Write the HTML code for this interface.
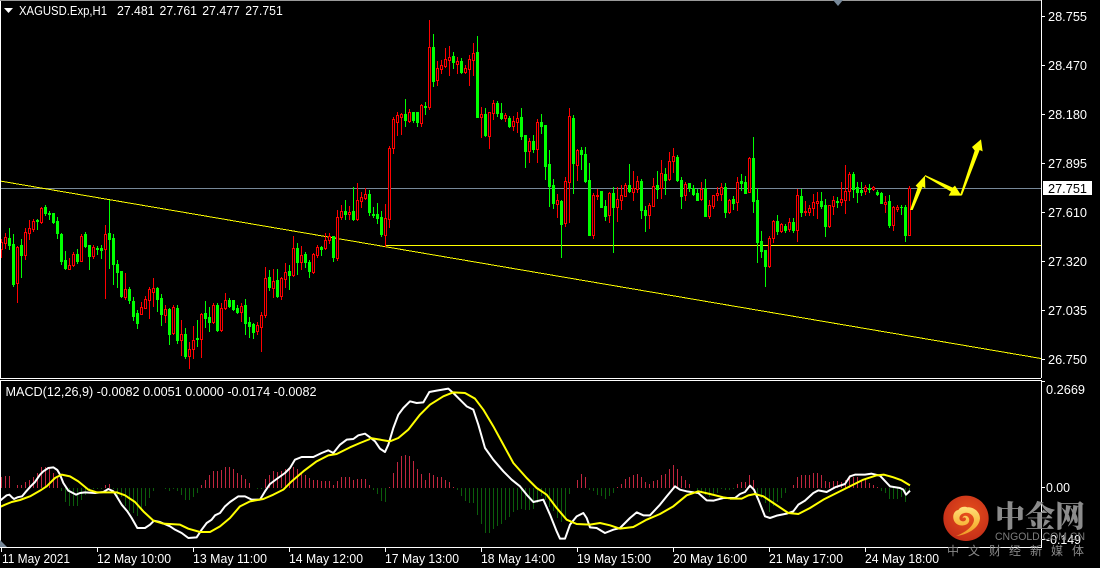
<!DOCTYPE html>
<html><head><meta charset="utf-8"><title>XAGUSD.Exp,H1</title>
<style>
html,body{margin:0;padding:0;background:#000;width:1100px;height:568px;overflow:hidden}
svg{display:block}
text{font-family:"Liberation Sans",sans-serif;font-size:13px;fill:#fff}
.c{shape-rendering:crispEdges;fill:none}
</style></head><body>
<svg width="1100" height="568" viewBox="0 0 1100 568" xmlns="http://www.w3.org/2000/svg">
<rect width="1100" height="568" fill="#000"/>

<!-- hist -->
<path class="c" stroke="#c2263f" stroke-width="1" d="M1.5 488V477M5.5 488V476M9.5 488V476M17.5 488V485M21.5 488V485M25.5 488V482M29.5 488V480M33.5 488V477M37.5 488V473M41.5 488V467M45.5 488V467M49.5 488V467M53.5 488V473M57.5 488V478M105.5 488V485M109.5 488V484M201.5 488V485M205.5 488V480M209.5 488V475M213.5 488V471M217.5 488V471M221.5 488V470M225.5 488V467M229.5 488V467M233.5 488V469M237.5 488V473M241.5 488V475M245.5 488V479M249.5 488V483M265.5 488V479M269.5 488V475M273.5 488V471M277.5 488V472M281.5 488V471M285.5 488V469M289.5 488V469M293.5 488V467M297.5 488V469M301.5 488V473M305.5 488V475M309.5 488V478M313.5 488V480M317.5 488V480M321.5 488V481M325.5 488V481M329.5 488V481M333.5 488V485M337.5 488V481M341.5 488V477M345.5 488V477M349.5 488V477M353.5 488V480M357.5 488V479M361.5 488V479M365.5 488V479M369.5 488V485M389.5 488V487M393.5 488V473M397.5 488V462M401.5 488V456M405.5 488V455M409.5 488V456M413.5 488V461M417.5 488V469M421.5 488V474M425.5 488V480M429.5 488V473M433.5 488V475M437.5 488V477M441.5 488V477M445.5 488V480M449.5 488V482M453.5 488V487M577.5 488V480M581.5 488V474M585.5 488V477M617.5 488V487M621.5 488V484M625.5 488V479M629.5 488V477M633.5 488V475M637.5 488V474M641.5 488V477M645.5 488V482M649.5 488V484M653.5 488V481M657.5 488V480M661.5 488V475M665.5 488V474M669.5 488V469M673.5 488V465M677.5 488V469M681.5 488V476M685.5 488V480M689.5 488V484M737.5 488V484M741.5 488V482M745.5 488V482M749.5 488V475M753.5 488V480M793.5 488V485M797.5 488V477M801.5 488V475M805.5 488V475M809.5 488V475M813.5 488V473M817.5 488V473M821.5 488V475M825.5 488V481M829.5 488V482M833.5 488V481M837.5 488V481M841.5 488V482M845.5 488V480M849.5 488V477M853.5 488V477M857.5 488V477M861.5 488V480M865.5 488V480M869.5 488V483M873.5 488V485M877.5 488V487"/>
<path class="c" stroke="#0b5e0b" stroke-width="1" d="M61.5 488V491M65.5 488V502M69.5 488V506M73.5 488V506M77.5 488V506M81.5 488V500M85.5 488V495M89.5 488V491M93.5 488V489M97.5 488V489M101.5 488V489M113.5 488V489M117.5 488V498M121.5 488V497M125.5 488V506M129.5 488V511M133.5 488V513M137.5 488V516M141.5 488V511M145.5 488V506M149.5 488V498M153.5 488V491M165.5 488V489M169.5 488V491M173.5 488V489M177.5 488V491M181.5 488V495M185.5 488V500M189.5 488V500M193.5 488V497M197.5 488V493M257.5 488V489M261.5 488V489M373.5 488V490M377.5 488V494M381.5 488V501M385.5 488V502M457.5 488V490M461.5 488V496M465.5 488V501M469.5 488V503M473.5 488V503M477.5 488V515M481.5 488V524M485.5 488V533M489.5 488V533M493.5 488V529M497.5 488V526M501.5 488V524M505.5 488V520M509.5 488V517M513.5 488V512M517.5 488V510M521.5 488V509M525.5 488V510M529.5 488V510M533.5 488V509M537.5 488V503M541.5 488V496M545.5 488V500M549.5 488V507M553.5 488V511M557.5 488V518M561.5 488V522M565.5 488V518M569.5 488V494M589.5 488V490M593.5 488V491M597.5 488V495M601.5 488V496M605.5 488V499M609.5 488V496M613.5 488V493M697.5 488V491M701.5 488V493M705.5 488V495M709.5 488V497M713.5 488V495M717.5 488V493M721.5 488V489M725.5 488V490M729.5 488V490M733.5 488V489M757.5 488V498M761.5 488V498M765.5 488V503M769.5 488V512M773.5 488V506M777.5 488V502M781.5 488V498M785.5 488V493M881.5 488V491M885.5 488V493M889.5 488V499M893.5 488V499M897.5 488V499M901.5 488V497M905.5 488V502M909.5 488V491"/>

<!-- MACD lines -->
<g fill="none" stroke="#fff" stroke-width="6" stroke-linejoin="round">
<polyline transform="translate(0,378) scale(.33333)" points="0,368 10,360 20,352 28,350 36,358 42,363 52,358 66,355 76,343 92,325 105,312 120,290 130,280 145,270 160,268 172,276 180,290 190,315 205,338 228,350 240,345 255,343 285,345 310,342 325,333 340,340 350,355 365,380 382,400 395,420 412,450 435,450 450,440 462,428 480,432 510,445 525,455 545,465 565,480 590,478 605,455 620,435 635,425 645,412 660,405 675,385 690,372 715,355 735,355 755,365 780,365 795,340 810,318 830,303 855,285 870,270 885,245 905,237 940,237 965,225 985,217 1000,225 1020,200 1040,185 1060,183 1075,172 1095,167 1110,178"/>
<polyline transform="translate(370,378) scale(.33333)" points="0,178 15,190 30,212 45,222 55,200 70,150 85,110 100,90 120,70 140,75 160,73 178,42 200,38 235,32 250,45 270,65 290,85 310,95 325,140 345,210 370,245 400,280 425,305 450,325 470,350 490,372 520,365 540,410 560,460 570,482 585,482 600,440 620,415 640,405 650,420 660,448 680,450 705,465 730,455 750,450 780,420 800,403 820,412 840,412 870,380 890,355 915,325 930,335 950,340 985,345 1010,367 1030,368 1060,360 1080,360"/>
<polyline transform="translate(730,378) scale(.33333)" points="0,360 15,360 30,348 45,342 60,323 72,335 85,365 105,415 120,420 140,413 170,407 190,400 205,380 225,368 250,345 265,337 290,342 315,328 345,318 360,295 375,290 405,290 425,287 450,293 480,325 510,330 520,335 528,350 540,338"/>
</g>
<g fill="none" stroke="#ffff00" stroke-width="6" stroke-linejoin="round">
<polyline transform="translate(0,378) scale(.33333)" points="0,387 15,380 35,372 60,366 90,355 120,338 140,325 165,300 185,290 210,295 235,310 265,335 290,343 350,343 375,352 405,372 430,400 460,428 490,437 540,440 565,452 600,462 630,462 660,445 690,420 720,385 750,370 790,363 820,350 850,335 875,310 910,280 950,250 985,232 1010,228 1050,208 1080,195 1110,183"/>
<polyline transform="translate(370,378) scale(.33333)" points="0,180 30,185 60,190 85,180 115,155 150,110 180,80 220,55 250,43 285,45 315,62 340,95 370,145 400,200 430,255 470,300 500,330 530,350 560,390 590,425 620,438 660,440 690,435 720,442 750,452 790,447 830,425 870,408 910,385 950,352 985,340 1020,348 1060,358 1080,361"/>
<polyline transform="translate(730,378) scale(.33333)" points="0,362 35,362 55,352 75,348 100,355 130,375 175,405 205,408 240,390 280,365 340,335 400,305 440,292 462,290 490,298 515,307 540,322"/>
</g>

<!-- level lines -->
<path class="c" stroke="#778899" d="M0 188.5H1041"/>
<path class="c" stroke="#ffff00" d="M0 181L1041 358.5"/>
<path class="c" stroke="#ffff00" d="M385 245.5H1041"/>

<!-- wicks -->
<path class="c" stroke="#00ff00" stroke-width="1" d="M9.5 228V250M13.5 234V287M21.5 239V278M37.5 219V230M45.5 205V216M49.5 211V220M53.5 213V224M57.5 217V239M61.5 233V265M65.5 251V270M77.5 249V264M85.5 232V248M89.5 245V270M97.5 246V255M101.5 245V259M109.5 200V269M113.5 234V285M117.5 260V288M121.5 271V298M129.5 287V304M133.5 297V321M137.5 310V329M157.5 287V312M161.5 294V326M169.5 308V345M177.5 305V344M185.5 328V359M197.5 320V347M205.5 301V328M209.5 307V332M217.5 303V332M229.5 298V308M233.5 300V311M237.5 305V314M245.5 299V335M249.5 317V338M253.5 323V339M269.5 270V291M277.5 269V298M289.5 265V290M297.5 243V275M305.5 252V268M309.5 260V278M321.5 246V256M333.5 236V262M345.5 200V220M353.5 187V221M369.5 190V216M373.5 207V218M377.5 203V224M381.5 211V237M405.5 99V127M413.5 112V123M417.5 112V127M425.5 102V115M433.5 34V87M453.5 52V69M461.5 58V74M477.5 36V118M485.5 108V137M497.5 101V117M501.5 103V120M509.5 116V128M521.5 108V140M525.5 135V168M533.5 135V153M541.5 114V134M545.5 125V180M549.5 150V207M553.5 179V209M561.5 200V258M573.5 115V194M581.5 147V170M585.5 147V183M589.5 163V236M601.5 191V208M605.5 200V221M613.5 187V253M629.5 164V193M641.5 179V219M645.5 206V232M657.5 171V199M665.5 168V195M677.5 155V182M681.5 177V209M689.5 183V192M693.5 185V196M697.5 189V201M705.5 179V217M725.5 183V218M733.5 196V210M741.5 174V191M745.5 176V194M753.5 137V213M757.5 188V263M761.5 231V258M765.5 250V287M777.5 215V235M785.5 224V233M793.5 218V233M801.5 189V217M821.5 192V209M825.5 199V237M837.5 197V208M853.5 172V198M857.5 182V203M861.5 182V196M869.5 184V193M877.5 190V196M881.5 192V204M889.5 195V228M901.5 205V215M905.5 205V242"/>
<path class="c" stroke="#ff0000" stroke-width="1" d="M1.5 239V258M5.5 233V249M17.5 246V303M25.5 228V260M29.5 220V240M33.5 219V232M41.5 207V224M69.5 258V270M73.5 252V267M81.5 234V262M93.5 245V259M105.5 225V299M125.5 273V300M141.5 302V315M145.5 296V309M149.5 287V319M153.5 278V307M165.5 305V323M173.5 305V335M181.5 320V356M189.5 342V369M193.5 326V359M201.5 313V358M213.5 303V324M221.5 303V332M225.5 293V310M241.5 303V322M257.5 322V335M261.5 312V352M265.5 267V318M273.5 269V298M281.5 277V300M285.5 263V288M293.5 236V277M301.5 246V270M313.5 253V274M317.5 245V258M325.5 233V250M329.5 233V244M337.5 210V261M341.5 205V220M349.5 206V220M357.5 183V221M361.5 192V208M365.5 188V200M385.5 204V247M389.5 146V228M393.5 117V154M397.5 112V136M401.5 113V135M409.5 109V123M421.5 104V127M429.5 20V110M437.5 61V86M441.5 60V74M445.5 48V68M449.5 46V76M457.5 57V74M465.5 65V74M469.5 55V86M473.5 43V76M481.5 107V138M489.5 112V149M493.5 100V120M505.5 113V122M513.5 116V131M517.5 112V133M529.5 138V163M537.5 119V163M557.5 194V218M565.5 177V227M569.5 108V223M577.5 149V181M593.5 193V239M597.5 189V200M609.5 192V223M617.5 187V222M621.5 185V210M625.5 183V197M633.5 171V201M637.5 176V193M649.5 203V229M653.5 178V207M661.5 160V199M669.5 152V181M673.5 148V173M685.5 182V201M701.5 182V201M709.5 200V219M713.5 195V209M717.5 187V201M721.5 183V201M729.5 199V214M737.5 177V211M749.5 157V193M769.5 236V268M773.5 220V243M781.5 223V233M789.5 218V232M797.5 189V242M805.5 201V216M809.5 205V216M813.5 194V216M817.5 192V219M829.5 205V228M833.5 196V215M841.5 182V206M845.5 165V214M849.5 172V201M865.5 185V195M873.5 186V191M885.5 196V213M893.5 206V231M897.5 205V212M909.5 186V236"/>

<!-- green bodies -->
<path class="c" stroke="#00ff00" stroke-width="3" d="M9.5 238V246M13.5 244V285M21.5 245V256M37.5 220V222M45.5 207V214M49.5 213V215M53.5 213V223M57.5 221V234M61.5 234V262M65.5 260V269M77.5 254V262M85.5 234V247M89.5 245V257M97.5 248V250M101.5 248V251M109.5 233V240M113.5 238V265M117.5 264V273M121.5 271V297M129.5 289V301M133.5 301V317M137.5 313V324M157.5 288V300M161.5 298V315M169.5 309V335M177.5 308V341M185.5 334V357M197.5 338V340M205.5 313V319M209.5 317V323M217.5 305V331M229.5 300V307M233.5 300V310M237.5 308V313M245.5 305V324M249.5 322V327M253.5 324V333M269.5 277V288M277.5 280V297M289.5 271V276M297.5 248V263M305.5 254V263M309.5 262V272M321.5 247V250M333.5 236V258M345.5 211V215M353.5 211V220M369.5 194V213M373.5 214V216M377.5 214V219M381.5 217V235M405.5 114V121M413.5 112V121M417.5 112V123M425.5 106V108M433.5 47V82M453.5 56V63M461.5 61V73M477.5 52V118M485.5 114V136M497.5 103V114M501.5 113V119M509.5 118V127M521.5 117V137M525.5 135V152M533.5 141V150M541.5 122V127M545.5 125V167M549.5 164V187M553.5 185V204M561.5 201V225M573.5 118V164M581.5 150V155M585.5 154V182M589.5 180V236M601.5 191V208M605.5 206V217M613.5 193V208M629.5 185V192M641.5 181V211M645.5 210V216M657.5 185V190M665.5 174V181M677.5 157V181M681.5 180V197M689.5 183V189M693.5 188V195M697.5 193V201M705.5 188V217M725.5 187V213M733.5 199V204M741.5 181V184M745.5 182V194M753.5 158V202M757.5 200V243M761.5 241V252M765.5 250V267M777.5 221V232M785.5 226V231M793.5 222V231M801.5 196V213M821.5 201V207M825.5 205V227M837.5 201V203M853.5 174V190M857.5 187V193M861.5 190V193M869.5 188V190M877.5 192V195M881.5 193V204M889.5 201V226M901.5 207V208M905.5 207V236"/>

<!-- red bodies (hollow) -->
<path class="c" stroke="#ff0000" stroke-width="1" style="fill:#000" d="M.5 242.5H2.5V249.5H.5ZM4.5 237.5H6.5V243.5H4.5ZM16.5 247.5H18.5V283.5H16.5ZM24.5 232.5H26.5V255.5H24.5ZM28.5 228.5H30.5V233.5H28.5ZM32.5 221.5H34.5V229.5H32.5ZM40.5 208.5H42.5V222.5H40.5ZM68.5 265.5H70.5V269.5H68.5ZM72.5 254.5H74.5V265.5H72.5ZM80.5 236.5H82.5V261.5H80.5ZM92.5 247.5H94.5V256.5H92.5ZM104.5 234.5H106.5V249.5H104.5ZM124.5 289.5H126.5V297.5H124.5ZM140.5 307.5H142.5V314.5H140.5ZM144.5 299.5H146.5V308.5H144.5ZM148.5 289.5H150.5V300.5H148.5ZM152.5 288.5H154.5V292.5H152.5ZM164.5 309.5H166.5V315.5H164.5ZM172.5 307.5H174.5V333.5H172.5ZM180.5 334.5H182.5V340.5H180.5ZM188.5 349.5H190.5V356.5H188.5ZM192.5 340.5H194.5V349.5H192.5ZM200.5 314.5H202.5V339.5H200.5ZM212.5 305.5H214.5V322.5H212.5ZM220.5 308.5H222.5V330.5H220.5ZM224.5 300.5H226.5V308.5H224.5ZM240.5 306.5H242.5V312.5H240.5ZM256.5 325.5H258.5V331.5H256.5ZM260.5 315.5H262.5V327.5H260.5ZM264.5 278.5H266.5V315.5H264.5ZM272.5 281.5H274.5V288.5H272.5ZM280.5 278.5H282.5V296.5H280.5ZM284.5 272.5H286.5V279.5H284.5ZM292.5 248.5H294.5V275.5H292.5ZM300.5 255.5H302.5V262.5H300.5ZM312.5 254.5H314.5V272.5H312.5ZM316.5 247.5H318.5V255.5H316.5ZM324.5 240.5H326.5V248.5H324.5ZM328.5 236.5H330.5V240.5H328.5ZM336.5 217.5H338.5V258.5H336.5ZM340.5 211.5H342.5V217.5H340.5ZM348.5 212.5H350.5V214.5H348.5ZM356.5 200.5H358.5V219.5H356.5ZM360.5 197.5H362.5V201.5H360.5ZM364.5 194.5H366.5V198.5H364.5ZM384.5 218.5H386.5V235.5H384.5ZM388.5 148.5H390.5V219.5H388.5ZM392.5 119.5H394.5V148.5H392.5ZM396.5 115.5H398.5V122.5H396.5ZM400.5 114.5H402.5V117.5H400.5ZM408.5 112.5H410.5V121.5H408.5ZM420.5 105.5H422.5V123.5H420.5ZM428.5 47.5H430.5V107.5H428.5ZM436.5 68.5H438.5V80.5H436.5ZM440.5 65.5H442.5V69.5H440.5ZM444.5 59.5H446.5V66.5H444.5ZM448.5 57.5H450.5V60.5H448.5ZM456.5 61.5H458.5V64.5H456.5ZM464.5 68.5H466.5V72.5H464.5ZM468.5 59.5H470.5V69.5H468.5ZM472.5 53.5H474.5V60.5H472.5ZM480.5 114.5H482.5V117.5H480.5ZM488.5 112.5H490.5V136.5H488.5ZM492.5 103.5H494.5V113.5H492.5ZM504.5 115.5H506.5V118.5H504.5ZM512.5 121.5H514.5V126.5H512.5ZM516.5 118.5H518.5V122.5H516.5ZM528.5 141.5H530.5V151.5H528.5ZM536.5 122.5H538.5V149.5H536.5ZM556.5 200.5H558.5V204.5H556.5ZM564.5 181.5H566.5V223.5H564.5ZM568.5 116.5H570.5V182.5H568.5ZM576.5 150.5H578.5V165.5H576.5ZM592.5 195.5H594.5V235.5H592.5ZM596.5 195.5H598.5V196.5H596.5ZM608.5 193.5H610.5V215.5H608.5ZM616.5 199.5H618.5V207.5H616.5ZM620.5 195.5H622.5V200.5H620.5ZM624.5 185.5H626.5V196.5H624.5ZM632.5 188.5H634.5V192.5H632.5ZM636.5 181.5H638.5V189.5H636.5ZM648.5 205.5H650.5V215.5H648.5ZM652.5 186.5H654.5V206.5H652.5ZM660.5 173.5H662.5V188.5H660.5ZM668.5 161.5H670.5V179.5H668.5ZM672.5 156.5H674.5V161.5H672.5ZM684.5 184.5H686.5V195.5H684.5ZM700.5 189.5H702.5V199.5H700.5ZM708.5 205.5H710.5V216.5H708.5ZM712.5 195.5H714.5V206.5H712.5ZM716.5 193.5H718.5V195.5H716.5ZM720.5 187.5H722.5V194.5H720.5ZM728.5 200.5H730.5V212.5H728.5ZM736.5 182.5H738.5V202.5H736.5ZM748.5 158.5H750.5V192.5H748.5ZM768.5 238.5H770.5V266.5H768.5ZM772.5 221.5H774.5V238.5H772.5ZM780.5 224.5H782.5V231.5H780.5ZM788.5 222.5H790.5V229.5H788.5ZM796.5 195.5H798.5V230.5H796.5ZM804.5 211.5H806.5V212.5H804.5ZM808.5 208.5H810.5V212.5H808.5ZM812.5 202.5H814.5V208.5H812.5ZM816.5 201.5H818.5V203.5H816.5ZM828.5 205.5H830.5V226.5H828.5ZM832.5 200.5H834.5V206.5H832.5ZM840.5 199.5H842.5V202.5H840.5ZM844.5 191.5H846.5V200.5H844.5ZM848.5 174.5H850.5V191.5H848.5ZM864.5 187.5H866.5V191.5H864.5ZM872.5 187.5H874.5V189.5H872.5ZM884.5 202.5H886.5V204.5H884.5ZM892.5 207.5H894.5V225.5H892.5ZM896.5 207.5H898.5V209.5H896.5ZM908.5 188.5H910.5V235.5H908.5Z"/>

<!-- arrows -->
<g transform="translate(900,135) scale(.33333)" fill="#ffff00">
<polygon points="30,225 53,158 47,152 75,122 76,160 68,155 38,225"/>
<polygon points="75,120 158,158 165,152 184,182 146,182 153,170 75,124"/>
<polygon points="180,181 224,47 216,36 243,13 248,49 239,45 186,181"/>
</g>

<!-- frame -->
<path class="c" stroke="#fff" d="M0 378.5H1041M0 380.5H1041M0 547.5H1041M1041.5 0V378M1041.5 380V548M.5 0V378M.5 380V547"/>
<path class="c" stroke="#9a9a9a" d="M0 .5H1041"/>
<polygon points="833,0 843,0 838,6" fill="#778899"/>
<polygon points="0,540 7,547 0,547" fill="#778899"/>

<!-- ticks -->
<path class="c" stroke="#fff" d="M1042 16.5H1045M1042 65.5H1045M1042 114.5H1045M1042 163.5H1045M1042 212.5H1045M1042 261.5H1045M1042 310.5H1045M1042 359.5H1045M1042 487.5H1045M1042 381.5H1045M1042 539.5H1045M1.5 548V552M97.5 548V552M193.5 548V552M289.5 548V552M385.5 548V552M481.5 548V552M577.5 548V552M673.5 548V552M769.5 548V552M865.5 548V552"/>

<!-- titles -->
<polygon points="4,8 13,8 8.5,13" fill="#fff"/>
<text x="19" y="15" textLength="88" lengthAdjust="spacingAndGlyphs">XAGUSD.Exp,H1</text>
<text x="117" y="15" textLength="37.5" lengthAdjust="spacingAndGlyphs">27.481</text>
<text x="159.500" y="15" textLength="37.5" lengthAdjust="spacingAndGlyphs">27.761</text>
<text x="202.300" y="15" textLength="37.5" lengthAdjust="spacingAndGlyphs">27.477</text>
<text x="245.300" y="15" textLength="37.5" lengthAdjust="spacingAndGlyphs">27.751</text>
<text x="5.500" y="396" textLength="311" lengthAdjust="spacingAndGlyphs">MACD(12,26,9) -0.0082 0.0051 0.0000 -0.0174 -0.0082</text>

<!-- price axis -->
<text x="1048" y="21" textLength="39" lengthAdjust="spacingAndGlyphs">28.755</text>
<text x="1048" y="70" textLength="39" lengthAdjust="spacingAndGlyphs">28.470</text>
<text x="1048" y="119" textLength="39" lengthAdjust="spacingAndGlyphs">28.180</text>
<text x="1048" y="168" textLength="39" lengthAdjust="spacingAndGlyphs">27.895</text>
<text x="1048" y="217" textLength="39" lengthAdjust="spacingAndGlyphs">27.610</text>
<text x="1048" y="266" textLength="39" lengthAdjust="spacingAndGlyphs">27.320</text>
<text x="1048" y="315" textLength="39" lengthAdjust="spacingAndGlyphs">27.035</text>
<text x="1048" y="364" textLength="39" lengthAdjust="spacingAndGlyphs">26.750</text>
<rect x="1043" y="181" width="49" height="14" fill="#fff"/>
<text x="1048" y="193" textLength="39" lengthAdjust="spacingAndGlyphs" style="fill:#000">27.751</text>
<text x="1046" y="394" textLength="39" lengthAdjust="spacingAndGlyphs">0.2669</text>
<text x="1046" y="492" textLength="24" lengthAdjust="spacingAndGlyphs">0.00</text>
<text x="1046" y="544" textLength="35" lengthAdjust="spacingAndGlyphs">-0.149</text>

<!-- time axis -->
<text x="2" y="563" textLength="68" lengthAdjust="spacingAndGlyphs">11 May 2021</text>
<text x="97" y="563" textLength="74" lengthAdjust="spacingAndGlyphs">12 May 10:00</text>
<text x="193" y="563" textLength="74" lengthAdjust="spacingAndGlyphs">13 May 11:00</text>
<text x="289" y="563" textLength="74" lengthAdjust="spacingAndGlyphs">14 May 12:00</text>
<text x="385" y="563" textLength="74" lengthAdjust="spacingAndGlyphs">17 May 13:00</text>
<text x="481" y="563" textLength="74" lengthAdjust="spacingAndGlyphs">18 May 14:00</text>
<text x="577" y="563" textLength="74" lengthAdjust="spacingAndGlyphs">19 May 15:00</text>
<text x="673" y="563" textLength="74" lengthAdjust="spacingAndGlyphs">20 May 16:00</text>
<text x="769" y="563" textLength="74" lengthAdjust="spacingAndGlyphs">21 May 17:00</text>
<text x="865" y="563" textLength="74" lengthAdjust="spacingAndGlyphs">24 May 18:00</text>

<!-- watermark -->
<defs>
<radialGradient id="lg" cx=".55" cy=".4" r=".65"><stop offset="0" stop-color="#e8501c"/><stop offset="1" stop-color="#c22c18"/></radialGradient>
<linearGradient id="ly" x1="0" y1="0" x2="0" y2="1"><stop offset="0" stop-color="#ffe07a"/><stop offset=".6" stop-color="#f8b83c"/><stop offset="1" stop-color="#ee9426"/></linearGradient>
</defs>
<g transform="translate(930,480) scale(.33333)">
<circle cx="108" cy="115" r="68" fill="url(#lg)"/>
<path fill="url(#ly)" d="M78 168C110 165 148 145 150 115C150 95 130 80 112 82C105 78 90 80 85 90C72 92 66 108 72 122C78 135 92 138 100 136C115 135 122 122 115 112C110 105 98 106 98 115C102 110 108 112 108 118C106 125 96 126 90 120C85 112 92 102 100 100C115 94 132 105 132 120C130 140 105 158 78 168Z"/>
</g>
<text x="995" y="527" style="font-family:'Liberation Serif','Noto Serif CJK SC',serif;font-size:30px;font-weight:900;fill:#8c8c8c">中金网</text>
<text x="995" y="540" textLength="90" lengthAdjust="spacingAndGlyphs" style="font-size:11px;fill:#7c7c7c">CNGOLD.COM.CN</text>
<text x="947 968 989 1009 1030 1051 1072" y="555" style="font-family:'Liberation Sans','Noto Sans CJK SC',sans-serif;font-size:12px;fill:#8a8a8a">中文财经新媒体</text>
</svg>
</body></html>
